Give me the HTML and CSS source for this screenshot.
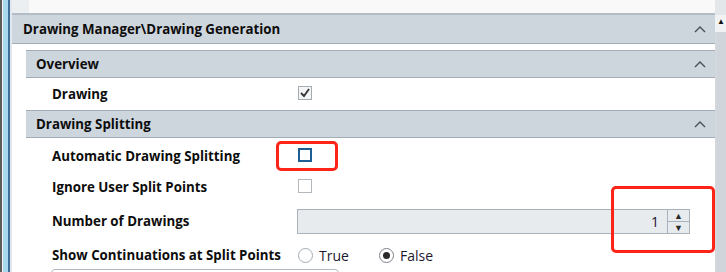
FILE: index.html
```html
<!DOCTYPE html>
<html lang="en">
<head>
  <meta charset="UTF-8" />
  <title>Drawing Generation</title>
  <link rel="stylesheet" href="styles.css">
</head>
<body>
  <div class="frame">
    <div class="edge"></div>

    <div class="main">
      <div class="topbar">
        <div class="topbar-side"></div>
        <div class="topbar-fill"></div>
      </div>

      <div class="group-head">
        <span>Drawing Manager\Drawing Generation</span>
        <svg class="chev" width="12" height="8" viewBox="0 0 12 8"><polyline points="1,7 6,2 11,7" /></svg>
      </div>

      <div class="group-body">
        <div class="sub-head">
          <span>Overview</span>
          <svg class="chev" width="12" height="8" viewBox="0 0 12 8"><polyline points="1,7 6,2 11,7" /></svg>
        </div>
        <div class="row row-drawing">
          <div class="label">Drawing</div>
          <div class="check checked">
            <svg width="12" height="12" viewBox="0 0 12 12"><polyline points="2,6 5,9 10,2" /></svg>
          </div>
        </div>

        <div class="sub-head">
          <span>Drawing Splitting</span>
          <svg class="chev" width="12" height="8" viewBox="0 0 12 8"><polyline points="1,7 6,2 11,7" /></svg>
        </div>
        <div class="row row-auto">
          <div class="label">Automatic Drawing Splitting</div>
          <div class="check focused"></div>
        </div>
        <div class="row">
          <div class="label">Ignore User Split Points</div>
          <div class="check"></div>
        </div>
        <div class="row row-spin">
          <div class="label">Number of Drawings</div>
          <div class="spin">
            <div class="spin-value">1</div>
            <div class="spin-btns">
              <div class="spin-btn">&#9650;</div>
              <div class="spin-btn">&#9660;</div>
            </div>
          </div>
        </div>
        <div class="row">
          <div class="label">Show Continuations at Split Points</div>
          <div class="radios">
            <div class="radio-opt"><span class="radio"></span>True</div>
            <div class="radio-opt"><span class="radio on"></span>False</div>
          </div>
        </div>
        <div class="next-box"></div>
      </div>
    </div>

    <div class="scroll">
      <div class="scroll-top"></div>
      <div class="scroll-up">&#9650;</div>
      <div class="scroll-thumb"></div>
    </div>

    <div class="mark mark-auto"></div>
    <div class="mark mark-spin"></div>
  </div>
</body>
</html>
```

FILE: styles.css
```css
* {
  box-sizing: border-box;
}
html, body {
  margin: 0;
  padding: 0;
  height: 272px;
  overflow: hidden;
  background: #fff;
}
body {
  font-family: "Open Sans", "Noto Sans", Arial, sans-serif;
  font-size: 13.3px;
  color: #0d0d0d;
}
.frame {
  position: relative;
  display: flex;
  height: 272px;
  overflow: hidden;
}
.edge {
  width: 12px;
  flex-shrink: 0;
  background: linear-gradient(to right, #5c5c5c 0 2px, #f2f2f2 2px 3px, #a8d9ec 3px 8px, #3f6f98 8px 10px, #e4e8ec 10px 12px);
}
.main {
  flex: 1;
  min-width: 0;
}
.topbar {
  height: 15px;
  display: flex;
  border-bottom: 2px solid #b4bcc5;
}
.topbar-side {
  width: 17px;
  background: #eceff2;
}
.topbar-fill {
  flex: 1;
  background: #f9f9f9;
}

.group-head,
.sub-head {
  display: flex;
  align-items: center;
  justify-content: space-between;
  background: #cdd5dd;
  font-weight: bold;
  padding-right: 9px;
}
.group-head {
  height: 29px;
  padding-left: 11px;
  border-bottom: 1px solid #a3adb8;
}
.sub-head {
  height: 28px;
  padding-left: 10px;
  border-top: 1px solid #a3adb8;
  border-bottom: 1px solid #a3adb8;
}
.chev {
  fill: none;
  stroke: #4a4f55;
  stroke-width: 1.4;
}
.group-body {
  padding: 6px 0 0 14px;
}

.row {
  display: flex;
  align-items: center;
  height: 26px;
}
.row-drawing { height: 32px; }
.row-auto { height: 36px; }
.row-spin { height: 42px; }
.label {
  width: 271px;
  flex-shrink: 0;
  padding-left: 26px;
  font-weight: bold;
  white-space: nowrap;
}

.check {
  width: 14px;
  height: 14px;
  flex-shrink: 0;
  margin: -3px 0 0 1px;
  border: 1px solid #b3b8bd;
  background: #fff;
  display: flex;
  align-items: center;
  justify-content: center;
}
.check.checked {
  background: #f4f5f6;
  border-color: #a6abb0;
}
.check svg {
  fill: none;
  stroke: #333;
  stroke-width: 1.8;
}
.check.focused {
  border: 2px solid #1d5f94;
}

.spin {
  width: 393px;
  height: 25px;
  flex-shrink: 0;
  display: flex;
  background: #e8ebee;
  border: 1px solid #a7b2bd;
}
.spin-value {
  flex: 1;
  text-align: right;
  padding-right: 8px;
  line-height: 23px;
  font-size: 14px;
  color: #1a1030;
}
.spin-btns {
  width: 22px;
  border-left: 1px solid #a7b2bd;
  display: flex;
  flex-direction: column;
}
.spin-btn {
  flex: 1;
  font-size: 9px;
  line-height: 11px;
  text-align: center;
  color: #2b2b2b;
}
.spin-btn + .spin-btn {
  border-top: 1px solid #a7b2bd;
}

.radios {
  display: flex;
  padding-left: 1px;
  font-size: 14px;
  font-weight: normal;
  color: #1c1830;
}
.radio-opt {
  display: flex;
  align-items: center;
  gap: 6px;
  width: 81px;
}
.radio {
  width: 15px;
  height: 15px;
  flex-shrink: 0;
  border: 1px solid #a3acb5;
  border-radius: 50%;
  background: #fff;
  display: flex;
  align-items: center;
  justify-content: center;
}
.radio.on {
  border-color: #7d848b;
}
.radio.on::after {
  content: "";
  width: 7px;
  height: 7px;
  border-radius: 50%;
  background: #2a2a2a;
}
.next-box {
  margin: 1px 0 0 25px;
  width: 288px;
  height: 24px;
  border: 1px solid #b0b9c2;
  border-radius: 4px;
}

.scroll {
  width: 11px;
  flex-shrink: 0;
  display: flex;
  flex-direction: column;
  background: #d3d8dd;
}
.scroll-top {
  height: 15px;
  flex-shrink: 0;
  background: #e4e7ea;
}
.scroll-up {
  height: 17px;
  flex-shrink: 0;
  background: #f1f2f3;
  font-size: 8px;
  line-height: 12px;
  text-align: right;
  padding-right: 1px;
  color: #111;
}
.scroll-thumb {
  flex: 1;
  margin-left: 2px;
  background: #cfd5db;
}

/* red highlight boxes drawn over the screenshot */
.mark {
  position: absolute;
  border: 3px solid #ff2418;
  border-radius: 5px;
}
.mark-auto {
  left: 276px;
  top: 141px;
  width: 62px;
  height: 30px;
}
.mark-spin {
  left: 611px;
  top: 186px;
  width: 104px;
  height: 67px;
}
```
